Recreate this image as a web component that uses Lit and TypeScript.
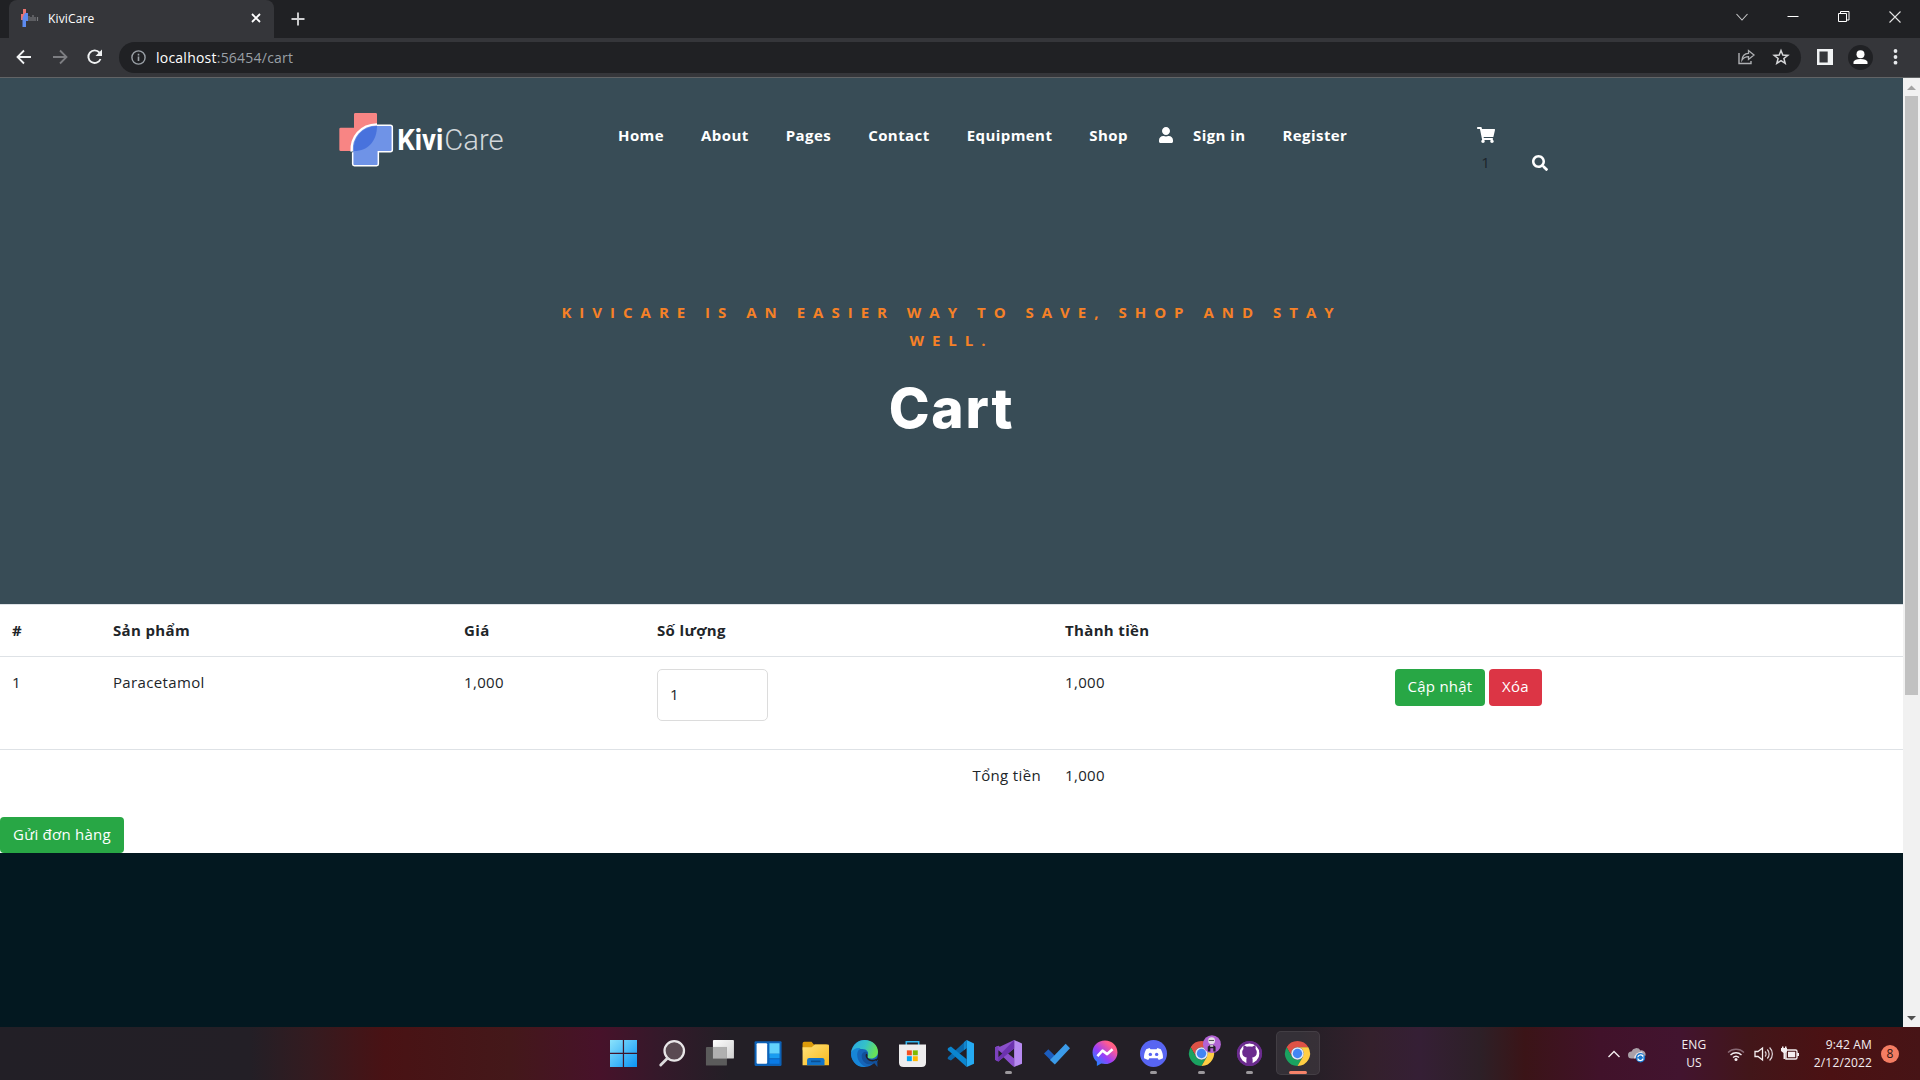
import { LitElement, html, css, svg } from "lit";
import { customElement } from "lit/decorators.js";

const chrome = svg`
  <path d="M1.600 6A12 12 0 0 1 22.400 6H12A6 6 0 0 0 6.800 15Z" fill="#de5246"/>
  <path d="M1.600 6 6.800 15A6 6 0 0 0 17.200 15L12 24A12 12 0 0 1 1.600 6Z" fill="#1aa260"/>
  <path d="M22.400 6H12A6 6 0 0 1 17.200 15L12 24A12 12 0 0 0 22.400 6Z" fill="#ffce44"/>
  <circle cx="12" cy="12" r="6" fill="#dfe8f6"/>
  <circle cx="12" cy="12" r="4.500" fill="#4285f4"/>`;

const taskIcons: { art: unknown; size?: number; mark?: string }[] = [
  { size: 27, art: svg`<defs><linearGradient id="w" x2="1" y2="1"><stop stop-color="#8be2fb"/><stop offset="1" stop-color="#0a94f5"/></linearGradient></defs>
      <path d="M0 0h11.400v11.400H0zM12.500 0H24v11.400H12.500zM0 12.500h11.400V24H0zM12.500 12.500H24V24H12.500z" fill="url(#w)"/>` },
  { size: 26, art: svg`<circle cx="15" cy="10" r="9" fill="#5a4a52" stroke="#e9e6e8" stroke-width="2.100"/><path d="M8.500 17 2.500 23" stroke="#dcdadc" stroke-width="2.600" stroke-linecap="round"/>` },
  { size: 28, art: svg`<defs><linearGradient id="tv" x2="1" y2="1"><stop stop-color="#fff"/><stop offset="1" stop-color="#d0d0d0"/></linearGradient></defs>
      <g transform="translate(.8 .8)"><rect x="6" y="0" width="18" height="16" rx=".8" fill="url(#tv)"/><rect x="0" y="6" width="18" height="16" rx=".8" fill="#5b5b5b"/><path d="M6 6h12v10H6z" fill="#b0b0b0"/></g>` },
  { size: 27, art: svg`<g transform="translate(.5 0)"><rect width="24" height="22" y="1" rx="1" fill="#0c62b8"/><rect x="1.800" y="2.800" width="9.400" height="18.400" rx="1" fill="#fff"/><path d="M13.200 2.800h9v9.500h-9z" fill="#62d2fc"/><path d="M13.200 12.300h9v4h-9z" fill="#199cf0"/><path d="M13.200 17h9v4.200h-9z" fill="#0a7be6"/></g>` },
  { size: 27, art: svg`<defs><linearGradient id="fo" x2="1" y2="1"><stop stop-color="#ffe27a"/><stop offset="1" stop-color="#f9b91c"/></linearGradient></defs>
      <path d="M.5 3q0-1.500 1.500-1.500h6.500l2 2.500H22v5H.5z" fill="#dc9b0a"/><path d="M.5 6.500h8l3-2.500h11.500q1 0 1 1V22.500H.5z" fill="url(#fo)"/><path d="M4.500 22.500V18q0-2 2-2h11.500q2 0 2 2v4.500z" fill="#1173c9"/><path d="M8 19h8.500" stroke="#0a4f92" stroke-width="1.500"/>` },
  { size: 27, art: svg`<defs><linearGradient id="ed" x2="1" y2=".3"><stop stop-color="#2aa7e4"/><stop offset=".55" stop-color="#35c1c8"/><stop offset="1" stop-color="#66e25a"/></linearGradient></defs>
      <circle cx="12" cy="12" r="12" fill="#1565b9"/><path d="M.2 10.500C1.500 4 6.500 0 12 0c7 0 12 5 12 10.500 0 4-3 6-6 6s-4-1.200-3.400-2.300c1.900-3-.5-6.200-4.600-6.200C4.500 8 1 11 .2 10.500Z" fill="url(#ed)"/>
      <path d="M.1 11C1.700 8 5 6.600 8.500 7.200 6 9 5 11.800 5.700 15 6.500 19 9.500 22.500 13.500 23.900 5 25-.5 18 .1 11Z" fill="#1786d8"/>
      <path d="M14.500 14.500c-1 2.500 3 5.500 8 2.800L24 18l-.5 6-3-3.500C15 24 9 19 9.500 13.500 10 11 12.500 9.800 14.500 11Z" fill="#12509a"/><path d="M14.700 14.200c-.9 2.300 4 4.800 8.300 2.200L24 24v-5l-2-.7c-3.500 2-9-.5-9-4.500 0-2 1.500-2.500 1.700.4Z" fill="#231f26"/>` },
  { size: 27, art: svg`<path d="M6.500 5V1.500h11V5" fill="none" stroke="#31b5ee" stroke-width="1.400"/><path d="M0 4h24v16q0 4-4 4H4q-4 0-4-4z" fill="#eeedee"/><path d="M7 9.200h4.400v4.400H7z" fill="#f25022"/><path d="M12.300 9.200h4.400v4.400h-4.400z" fill="#7fba00"/><path d="M7 14.400h4.400v4.400H7z" fill="#00a4ef"/><path d="M12.300 14.400h4.400v4.400h-4.400z" fill="#ffb900"/>` },
  { size: 27, art: svg`<path d="M17.500 0 24 3v18l-6.500 3z" fill="#25aaf2"/><path d="M17.500 0v7L3.500 18.200 1 17q-1-1 0-2z" fill="#0a69ad"/><path d="M17.500 24v-7L3.500 5.800 1 7Q0 8 1 9z" fill="#0b86d0"/><path d="M17.500 0v7L15 9V2z" fill="#1285cc"/>` },
  { size: 27, mark: "dot", art: svg`<path d="M17 0 24 3v18l-7 3z" fill="#b78af0"/><path d="M17 0v7.500L3 19 0 17.500V6.500L3 5 17 16.500V24L14.500 22 0 8z" fill="#8a4fca"/><path d="M17 0v7.500L3 19 0 17.500z" fill="#6c32ae"/><path d="M0 6.500 3 5v14l-3-1.500z" fill="#7b41bd"/><path d="M3 9v6l3.500-3z" fill="#231f26"/>` },
  { size: 26, art: svg`<path d="m0 12.500 4-4 6.500 6.500-4 4z" fill="#1c5dbe"/><path d="m5.500 18.500 14.500-15 4 4L10 22.500z" fill="#3b9be9"/>` },
  { size: 26, art: svg`<defs><linearGradient id="me" x1="1" y1="0" x2=".1" y2="1"><stop stop-color="#ff6b5e"/><stop offset=".25" stop-color="#ff5c90"/><stop offset=".6" stop-color="#9a3dfa"/><stop offset="1" stop-color="#0a90ff"/></linearGradient></defs>
      <path d="M12 .5C5.300.500.500 5.200.500 11.500c0 3.500 1.500 6.500 4 8.500v4l4-2.200c7.500 2 15-2.800 15-10.300C23.500 5.200 18.700.500 12 .500Z" fill="url(#me)"/><path d="m5 14.800 4.700-5 4.300 3.200 5-4.500" stroke="#fff" stroke-width="2.400" fill="none" stroke-linejoin="round"/>` },
  { size: 27, mark: "dot", art: svg`<circle cx="12" cy="12" r="12" fill="#5865f2"/><path d="M8.500 7 5.500 8.200C4 11 3.400 13.500 3.600 16.200l3.700 1.600 1-1.600h7.400l1 1.600 3.700-1.600c.2-2.700-.4-5.200-1.900-8L15.500 7l-.8 1.200H9.300z" fill="#fff"/><circle cx="9.200" cy="12.800" r="1.500" fill="#5865f2"/><circle cx="14.800" cy="12.800" r="1.500" fill="#5865f2"/>` },
  { size: 25, mark: "dot", art: svg`${chrome}<g transform="translate(10.500 -6)"><circle cx="11.500" cy="9" r="8.600" fill="#b263d4"/><path d="M7.500 16V11.500q4-4 7.500 0V16h-2.200v-3h-2.800v3z" fill="#26202b"/><circle cx="11.200" cy="5.800" r="3.300" fill="#e6dfe8"/><path d="M8.500 5.500h5" stroke="#555" stroke-width="1"/><path d="M9.800 10h3v1.500h-3z" fill="#e6dfe8"/></g>` },
  { size: 25, mark: "dot", art: svg`<circle cx="12" cy="12" r="12" fill="#6b2c8e"/><path d="M9 21.500v-3c-3 .6-3.500-1-4.500-2.200M9 21.500v-4c0-.8.300-1.200.600-1.500C6.500 15.500 5 14 5 10.800c0-1.300.5-2.300 1.200-3.200-.3-1-.2-2.200.2-3.200 1.200 0 2.300.7 3 1.200 1.700-.4 3.500-.4 5.200 0 .8-.5 1.800-1.200 3-1.200.4 1 .5 2.200.2 3.200.7.900 1.200 1.900 1.200 3.200 0 3.200-1.600 4.700-4.600 5.200.4.400.6 1 .6 1.800v3.700a10 10 0 1 0-6 0Z" fill="#fff"/><circle cx="12" cy="12" r="10.800" fill="none" stroke="#6b2c8e" stroke-width="2.600"/>` },
  { size: 25, mark: "active", art: chrome },
];

@customElement("app-root")
export class AppRoot extends LitElement {
  static styles = css`
    :host { display: flex; flex-direction: column; width: 1920px; height: 1080px; overflow: hidden; font-family: "Open Sans", "Noto Sans", sans-serif; color: #212529; }
    * { box-sizing: border-box; }
    svg { display: block; flex: none; overflow: visible; }
    .strip { height: 38px; background: #202124; display: flex; align-items: stretch; padding-left: 9px; }
    .tab { width: 265px; background: #35363a; border-radius: 8px 8px 0 0; display: flex; align-items: center; padding: 0 13px 2px 12px; font-size: 12px; color: #fff; gap: 8px; }
    .tab .name { flex: 1; letter-spacing: .15px; }
    .plus { align-self: center; margin-left: 17px; }
    .wins { margin-left: auto; display: flex; align-items: center; padding: 0 19px 4px 0; gap: 39px; }
    .bar { height: 40px; background: #35363a; border-bottom: 1px solid #626466; display: flex; align-items: center; padding: 0 16px 1px; }
    .nav { display: flex; gap: 15px; width: 103px; }
    .url { width: 1682px; height: 31px; border-radius: 16px; background: #202124; display: flex; align-items: center; padding: 0 12px 0 12px; color: #9aa0a6; font-size: 14px; }
    .url .addr { margin-left: 10px; flex: 1; letter-spacing: .23px; }
    .url b { font-weight: 400; color: #fff; }
    .url .acts { display: flex; gap: 18px; align-items: center; }
    .right { display: flex; align-items: center; margin-left: 16px; gap: 15px; }
    .dots { margin-left: 5px; }
    .view { flex: 1; display: flex; min-height: 0; }
    .page { width: 1903px; display: flex; flex-direction: column; background: #fff; }
    .hero { height: 526px; background: #384c56; display: flex; flex-direction: column; align-items: center; }
    .head { align-self: stretch; height: 130px; display: flex; padding: 35px 0 0 339px; align-items: flex-start; }
    .menu { display: flex; gap: 37px; margin-left: 114px; padding-top: 8px; line-height: 28px; font-size: 15px; font-weight: 700; color: #fff; width: 858px; letter-spacing: .43px; }
    .sign { display: flex; gap: 20px; align-items: center; margin-left: -6px; }
    .cart { display: flex; flex-direction: column; align-items: center; width: 19px; padding-top: 14px; font-size: 15px; line-height: 28px; color: #1b242b; gap: 5px; }
    .find { margin: 42px 0 0 37px; }
    .tag { width: 830px; margin-top: 90px; text-align: center; color: #f68127; font-size: 15px; font-weight: 700; line-height: 28px; letter-spacing: 8px; text-transform: uppercase; }
    .title { margin: 17px 0 0; font: 800 55px/74px Inter, "Open Sans", sans-serif; color: #fff; letter-spacing: 1.8px; }
    table { border-collapse: separate; border-spacing: 0; table-layout: fixed; width: 1903px; font-size: 15px; }
    th, td { border-top: 1px solid #dee2e6; padding: 12px; text-align: left; vertical-align: top; line-height: 26px; letter-spacing: .35px; }
    th { height: 52px; }
    .item td { height: 93px; }
    .sum td { height: 68px; }
    .sum .lab { text-align: right; }
    .c1 { width: 101px; } .c2 { width: 351px; } .c3 { width: 193px; } .c4 { width: 408px; } .c5 { width: 330px; }
    .qty { width: 111px; height: 52px; border: 1px solid #dcdcdc; border-radius: 5px; padding: 0 12px 2px; font: 15px "Open Sans", sans-serif; color: #212529; display: block; }
    .btns { display: flex; gap: 4px; }
    .btn { height: 37px; border: 0; border-radius: 4px; background: #28a745; color: #fff; font: 15px "Open Sans", sans-serif; padding: 0 0 3px; width: 90px; letter-spacing: .25px; }
    .btn.red { background: #dc3545; width: 53px; }
    .btn.send { width: 124px; height: 36px; }
    .foot { flex: 1; background: #031820; }
    .scroll { width: 17px; background: #f1f1f1; display: flex; flex-direction: column; align-items: center; padding: 7px 0 6px; }
    .thumb { width: 13px; height: 599px; background: #c1c1c1; margin: 6px 0 auto; }
    .task { height: 53px; display: flex; align-items: center; padding-left: 599px; color: #f4eef0;
      background: linear-gradient(90deg, #221f26 0, #231f26 250px, #341b20 310px, #491214 385px, #44181a 510px, #47122a 600px, #34192a 660px, #231f26 730px, #231f26 1300px, #34202c 1370px, #351f35 1420px, #2d2027 1480px, #3b1417 1525px, #41122a 1600px, #42142f 1680px, #421619 1750px, #4b1113 1830px, #471416 1920px); }
    .slot { width: 48.200px; height: 53px; display: flex; align-items: center; justify-content: center; position: relative; flex: none; padding-bottom: 1px; }
    .slot.active::before { content: ""; position: absolute; inset: 4px 2px 5px 2px; border-radius: 5px; background: #ffffff14; border: 1px solid #ffffff12; }
    .slot.dot::after, .slot.active::after { content: ""; position: absolute; bottom: 6px; width: 7px; height: 3px; border-radius: 2px; background: #9b989c; }
    .slot.active::after { width: 18px; background: #f5836a; }
    .slot svg { position: relative; }
    .tray { margin-left: auto; display: flex; align-items: center; padding-right: 21px; font-size: 12px; line-height: 18px; }
    .cloud { margin-left: 8px; }
    .lang { width: 50px; text-align: center; margin-left: 23px; padding-top: 1px; letter-spacing: .2px; }
    .sys { display: flex; gap: 8.500px; margin-left: 8px; align-items: center; }
    .clock { text-align: right; width: 70px; margin-left: 3px; letter-spacing: .15px; }
    .count { width: 18px; height: 18px; border-radius: 9px; background: #f47d63; color: #2b1512; text-align: center; margin-left: 9px; font-size: 12px; line-height: 17px; }
  `;

  logo() {
    return html`<svg width="165" height="54" viewBox="57 69 495 162">
      <path d="M102 113V73q0-4 4-4h61q4 0 4 4v110H62q-4 0-4-4v-62q0-4 4-4z" fill="#f88584"/>
      <path d="M99 187C91 145 120 106 171 106h40q6 0 6 6v69q0 5-6 5h-35v36q0 5-5 5h-68q-5 0-5-5z" fill="#6f93e7"/>
      <path d="M102 183C98 145 125 110 171 108 171 152 145 183 102 183Z" fill="#4872dd"/>
      <path d="M98 187V222q0 5 5 5h67q5 0 5-5v-37h36q6 0 6-6v-67q0-6-6-6h-40" fill="none" stroke="#fff" stroke-width="4.500"/>
      <path d="M95 185C92 142 121 104 171 103" fill="none" stroke="#fff" stroke-width="7"/>
      <text x="232" y="179" font-family="Roboto" font-weight="700" font-size="91" textLength="138" lengthAdjust="spacingAndGlyphs" fill="#fff">Kivi</text>
      <text x="373" y="179" font-family="Roboto" font-weight="300" font-size="91" textLength="178" lengthAdjust="spacingAndGlyphs" fill="#d2d7da">Care</text>
    </svg>`;
  }

  render() {
    return html`
      <div class="strip">
        <div class="tab">
          <svg width="19" height="18" viewBox="0 0 19 18"><path d="M2 0h3v5h2v6H0V5h2z" fill="#e87471"/><path d="M1.500 9 4 4h3v8H5v6H1.500z" fill="#5d8bf0"/><path d="M8 7v5M10 12V8M12 6v6M14 8v4M16.500 8v4" stroke="#77797c" stroke-width="1.200"/></svg>
          <span class="name">KiviCare</span>
          <svg width="10" height="10" viewBox="0 0 10 10"><path d="m1 1 8 8M9 1 1 9" stroke="#fff" stroke-width="1.800"/></svg>
        </div>
        <svg class="plus" width="14" height="14" viewBox="0 0 14 14"><path d="M7 .5v13M.5 7h13" stroke="#d0d1d3" stroke-width="1.900"/></svg>
        <div class="wins">
          <svg width="12" height="12" viewBox="0 0 12 12"><path d="m.5 3 5.500 6 5.500-6" fill="none" stroke="#c8c9ca" stroke-width="1.100"/></svg>
          <svg width="12" height="12" viewBox="0 0 12 12"><path d="M.5 5.500h11" stroke="#fff"/></svg>
          <svg width="12" height="12" viewBox="0 0 12 12"><path d="M.5 2.500h8v8h-8zM2.500 2.500v-2h8.500v8.500H8.500" fill="none" stroke="#fff"/></svg>
          <svg width="12" height="12" viewBox="0 0 12 12"><path d="m.5.500 11 11M11.500.500l-11 11" stroke="#e4e4e4" stroke-width="1.100"/></svg>
        </div>
      </div>
      <div class="bar">
        <div class="nav">
          <svg width="16" height="16" viewBox="0 0 16 16"><path d="M15 8H2M8 1.500 1.500 8 8 14.500" fill="none" stroke="#f1f3f4" stroke-width="1.800"/></svg>
          <svg width="20" height="16" viewBox="-5 0 20 16"><path d="M1 8h13M8 1.500 14.500 8 8 14.500" fill="none" stroke="#7d7e82" stroke-width="1.800"/></svg>
          <svg width="20" height="16" viewBox="-5 0 20 16"><path d="M13.500 10A6.300 6.300 0 1 1 12.500 3.600" fill="none" stroke="#f1f3f4" stroke-width="1.900"/><path d="M15 .5V7H8.500z" fill="#f1f3f4"/></svg>
        </div>
        <div class="url">
          <svg width="15" height="15" viewBox="0 0 15 15"><circle cx="7.500" cy="7.500" r="6.600" fill="none" stroke="#9aa0a6" stroke-width="1.400"/><path d="M7.500 6.500V11M7.500 3.800v1.700" stroke="#9aa0a6" stroke-width="1.600"/></svg>
          <span class="addr"><b>localhost</b>:56454/cart</span>
          <div class="acts">
            <svg width="17" height="16" viewBox="0 0 17 16"><path d="M1 4v10.500h12V12" fill="none" stroke="#aeb0b3" stroke-width="1.400"/><path d="M4 11C4.300 6.500 7 4.500 10.500 4.300V1.500L16 6l-5.500 4.500V7.700C7.500 7.700 5.500 8.700 4 11Z" fill="none" stroke="#aeb0b3" stroke-width="1.300"/></svg>
            <svg width="16" height="16" viewBox="0 0 16 16"><path d="m8 1.500 1.800 4.600 5 .3-3.900 3.100 1.300 4.800L8 11.600l-4.200 2.700 1.300-4.800L1.200 6.400l5-.3z" fill="none" stroke="#d6d7d9" stroke-width="1.500"/></svg>
          </div>
        </div>
        <div class="right">
          <svg width="16" height="16" viewBox="0 0 16 16"><path d="M0 0h16v16H0z" fill="#f1f3f4"/><path d="M2.500 2.500h8.200v11H2.500z" fill="#35363a"/></svg>
          <svg width="25" height="25" viewBox="0 0 25 25"><circle cx="12.500" cy="12.500" r="12.500" fill="#202124"/><circle cx="12.500" cy="9.200" r="4" fill="#fff"/><path d="M5.500 19v-2.200q1-2.900 7-2.900t7 2.900V19z" fill="#fff"/></svg>
          <svg class="dots" width="5" height="16" viewBox="0 0 5 16"><circle cx="2.500" cy="2" r="1.900" fill="#e8eaed"/><circle cx="2.500" cy="8" r="1.900" fill="#e8eaed"/><circle cx="2.500" cy="13.700" r="1.900" fill="#e8eaed"/></svg>
        </div>
      </div>
      <div class="view">
        <div class="page">
          <div class="hero">
            <div class="head">
              ${this.logo()}
              <div class="menu">
                ${["Home", "About", "Pages", "Contact", "Equipment", "Shop"].map((t) => html`<span>${t}</span>`)}
                <span class="sign"><svg width="14" height="16" viewBox="0 0 448 512"><path fill="#fff" d="M224 256c70.700 0 128-57.300 128-128S294.700 0 224 0 96 57.300 96 128s57.300 128 128 128zm89.600 32h-16.700c-22.200 10.200-46.900 16-72.900 16s-50.600-5.800-72.900-16h-16.700C60.200 288 0 348.200 0 422.400V464c0 26.500 21.500 48 48 48h352c26.500 0 48-21.500 48-48v-41.600c0-74.200-60.200-134.400-134.400-134.400z"/></svg>Sign in</span>
                <span>Register</span>
              </div>
              <div class="cart"><svg width="18" height="16" viewBox="0 0 576 512"><path fill="#fff" d="M528.100 301.300l47.300-208C578.800 78.300 567.400 64 552 64H159.200l-9.200-44.800C147.800 8 137.900 0 126.500 0H24C10.700 0 0 10.700 0 24v16c0 13.300 10.700 24 24 24h69.900l70.200 343.400C147.300 417.100 136 435.200 136 456c0 30.900 25.100 56 56 56s56-25.100 56-56c0-15.700-6.400-29.800-16.800-40h209.600C430.400 426.200 424 440.300 424 456c0 30.900 25.100 56 56 56s56-25.100 56-56c0-22.200-12.900-41.300-31.600-50.400l5.500-24.300c3.400-15-8-29.300-23.400-29.300H218.100l-6.500-32h293.100c11.200 0 20.900-7.800 23.400-18.700z"/></svg><span>1</span></div>
              <svg class="find" width="16" height="16" viewBox="0 0 512 512"><path fill="#fff" d="M505 442.700L405.300 343c-4.500-4.500-10.600-7-17-7H372c27.600-35.300 44-79.700 44-128C416 93.100 322.900 0 208 0S0 93.100 0 208s93.100 208 208 208c48.300 0 92.700-16.400 128-44v16.300c0 6.400 2.500 12.500 7 17l99.700 99.700c9.400 9.400 24.600 9.400 33.900 0l28.300-28.300c9.400-9.400 9.400-24.600.1-34zM208 336c-70.700 0-128-57.200-128-128 0-70.700 57.200-128 128-128 70.700 0 128 57.200 128 128 0 70.700-57.200 128-128 128z"/></svg>
            </div>
            <div class="tag">KiviCare is an easier way to save, shop and stay well.</div>
            <h1 class="title">Cart</h1>
          </div>
          <table>
            <tr><th class="c1">#</th><th class="c2">Sản phẩm</th><th class="c3">Giá</th><th class="c4">Số lượng</th><th class="c5">Thành tiền</th><th></th></tr>
            <tr class="item"><td>1</td><td>Paracetamol</td><td>1,000</td><td><input class="qty" value="1" /></td><td>1,000</td>
              <td><div class="btns"><button class="btn">Cập nhật</button><button class="btn red">Xóa</button></div></td></tr>
            <tr class="sum"><td class="lab" colspan="4">Tổng tiền</td><td>1,000</td><td></td></tr>
          </table>
          <button class="btn send">Gửi đơn hàng</button>
          <div class="foot"></div>
        </div>
        <div class="scroll">
          <svg width="9" height="5" viewBox="0 0 9 5"><path d="M0 5 4.500.500 9 5z" fill="#a3a3a3"/></svg>
          <div class="thumb"></div>
          <svg width="9" height="5" viewBox="0 0 9 5"><path d="M0 0 4.500 4.500 9 0z" fill="#505050"/></svg>
        </div>
      </div>
      <div class="task">
        ${taskIcons.map((i) => html`<div class="slot ${i.mark ?? ""}"><svg width=${i.size ?? 26} height=${i.size ?? 26} viewBox="0 0 24 24">${i.art}</svg></div>`)}
        <div class="tray">
          <svg width="12" height="8" viewBox="0 0 12 8"><path d="m.5 7 5.500-5.500L11.500 7" fill="none" stroke="#f4eef0" stroke-width="1.400"/></svg>
          <svg class="cloud" width="18" height="16" viewBox="0 0 18 16"><path d="M3.500 12.500a3.500 3.500 0 0 1 0-7A5 5 0 0 1 12.500 4.500a4 4 0 0 1 2 8z" fill="#aaa0a8"/><path d="M6 12.500Q7 6 14 5.500l1.500 4z" fill="#e6e0e4"/><circle cx="12.500" cy="11.700" r="4.700" fill="#1876ce"/><path d="M9.800 11a2.800 2.800 0 0 1 5-.8v-1.500M15.200 12.500a2.800 2.800 0 0 1-5 .8v1.500" stroke="#fff" fill="none" stroke-width="1.200"/></svg>
          <div class="lang">ENG<br />US</div>
          <div class="sys">
            <svg width="18" height="14" viewBox="0 0 18 14"><path d="M1 5.500a11.500 11.500 0 0 1 16 0" stroke="#8a6a75" stroke-width="1.300" fill="none"/><path d="M3.500 8a8 8 0 0 1 11 0M6 10.600a4.500 4.500 0 0 1 6 0" stroke="#f4eef0" stroke-width="1.400" fill="none"/><circle cx="9" cy="12.500" r="1.500" fill="#f4eef0"/></svg>
            <svg width="19" height="16" viewBox="0 0 19 16"><path d="M1 5.500h3L8.500 2v12L4 10.500H1z" fill="none" stroke="#f4eef0" stroke-width="1.300"/><path d="M11 5.500a3.500 3.500 0 0 1 0 5M13.300 3.500a6.500 6.500 0 0 1 0 9M15.600 1.500a9 9 0 0 1 0 13" fill="none" stroke="#e0d6da" stroke-width="1.200"/></svg>
            <svg width="18" height="16" viewBox="0 0 18 16"><path d="M5 4h9.500q1.500 0 1.500 1.500v6q0 1.500-1.500 1.500H5z" fill="none" stroke="#f4eef0" stroke-width="1.400"/><path d="M7 5.800h7.200v5.400H7zM16 7h2v3h-2zM0 2h1V.5h1.500V2H4V.5h1.500V2H6v3.500L4.500 7v6H2.500V7L0 5z" fill="#f4eef0"/></svg>
          </div>
          <div class="clock">9:42 AM<br />2/12/2022</div>
          <div class="count">8</div>
        </div>
      </div>`;
  }
}
